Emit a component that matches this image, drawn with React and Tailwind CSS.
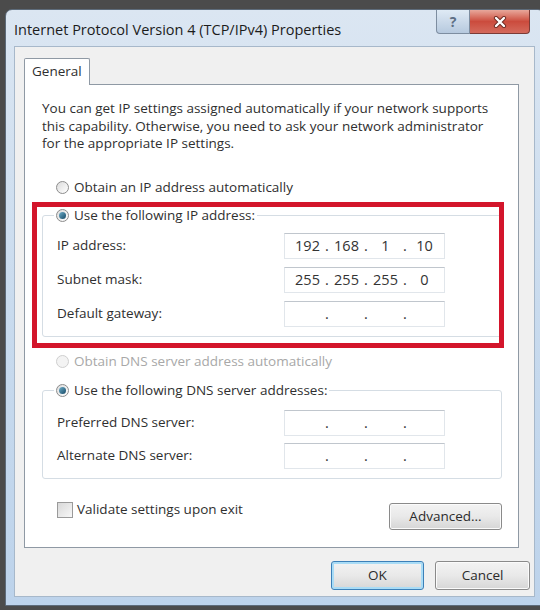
import { Fragment } from 'react';
import clsx from 'clsx';

// radio / checkbox in the Win7 look
const Radio = ({ checked, disabled }) => (
  <span
    className={clsx(
      'flex h-[13px] w-[13px] shrink-0 items-center justify-center rounded-full border',
      disabled
        ? 'border-[#cfcfcf] bg-[#f3f3f3]'
        : 'border-[#8c8c8c] bg-linear-to-br from-[#dcdcdc] to-[#ffffff]'
    )}
  >
    {checked && (
      <span className="h-[7px] w-[7px] rounded-full bg-linear-to-br from-[#6fb0cc] to-[#154a66]" />
    )}
  </span>
);

const RadioRow = ({ label, checked, disabled }) => (
  <div className="flex h-[18px] items-center gap-[5px]">
    <Radio checked={checked} disabled={disabled} />
    <span className={clsx('whitespace-nowrap', disabled && 'text-[#a8a8a8]')}>
      {label}
    </span>
  </div>
);

const IpBox = ({ parts = ['', '', '', ''] }) => (
  <div className="flex h-[26px] w-[161px] items-center border border-[#e1e6eb] border-t-[#c0c6cd] bg-white pl-[5px] text-[14.5px] text-[#333]">
    {parts.map((p, i) => (
      <Fragment key={i}>
        {i > 0 && <span className="w-[4px] text-center">.</span>}
        <span className="w-[35px] text-center">{p}</span>
      </Fragment>
    ))}
  </div>
);

const FieldRow = ({ label, parts }) => (
  <div className="flex h-[26px] items-center">
    <span className="w-[241px] pl-[14px]">{label}</span>
    <IpBox parts={parts} />
  </div>
);

const GroupBox = ({ legend, children, pt, gap }) => (
  <fieldset className="rounded-[3px] border border-[#d5dde4] pb-[9px]">
    <legend className="ml-[11px] px-[2px]">
      <RadioRow label={legend} checked />
    </legend>
    <div className={clsx('flex flex-col', pt, gap)}>{children}</div>
  </fieldset>
);

const Button = ({ children, primary, className }) => (
  <button
    className={clsx(
      'flex items-center justify-center rounded-[3px] border bg-linear-to-b from-[#f3f3f3] via-[#e9e9e9] to-[#d6d6d6] text-[#2b2b2b]',
      primary
        ? 'border-[#3c80b8] shadow-[inset_0_0_0_2px_#a9dcf6]'
        : 'border-[#8a8a8a] shadow-[inset_0_0_0_1px_#fbfbfb]',
      className
    )}
  >
    {children}
  </button>
);

export default function App() {
  return (
    <div className="h-[610px] w-[540px] overflow-hidden bg-[#4b4b4b] pl-[5px] pt-[9px] font-['Open_Sans',sans-serif] text-[13.5px] text-[#2f2f2f]">
      <div className="flex h-[597px] w-[540px] flex-col rounded-t-[7px] border border-[#5d6b7a] bg-linear-to-b from-[#dbe6f2] via-[#c9dbee] to-[#bdd3eb]">
        {/* title bar */}
        <div className="flex h-[36px] shrink-0 items-start">
          <span className="ml-[8px] mt-[9px] whitespace-nowrap text-[14.5px] text-[#1c1c1c]">
            Internet Protocol Version 4 (TCP/IPv4) Properties
          </span>
          <div className="ml-auto mr-[14px] flex">
            <div className="flex h-[24px] w-[34px] items-center justify-center rounded-bl-[4px] border border-t-0 border-[#7d8da0] bg-linear-to-b from-[#dfeaf5] to-[#b6c9de] text-[14px] font-bold text-[#5d6f84]">
              ?
            </div>
            <div className="flex h-[24px] w-[60px] items-center justify-center rounded-br-[4px] border border-l-0 border-t-0 border-[#7b3b36] bg-linear-to-b from-[#e7a79b] via-[#cb4b3d] to-[#d46a5c]">
              <svg width="14" height="12" viewBox="0 0 14 12">
                <path d="M3 2 L11 10 M11 2 L3 10" stroke="#6d2a22" strokeWidth="4.2" strokeLinecap="round" />
                <path d="M3 2 L11 10 M11 2 L3 10" stroke="#ffffff" strokeWidth="2.4" strokeLinecap="round" />
              </svg>
            </div>
          </div>
        </div>

        {/* client area */}
        <div className="ml-[8px] flex h-[551px] w-[521px] flex-col border border-[#a7b8ca] bg-[#f0f0f0] pl-[9px]">
          <div className="relative z-10 -mb-px mt-[11px] flex h-[27px] w-[66px] items-center rounded-t-[2px] border border-b-0 border-[#8f99a4] bg-white pb-[2px] pl-[7px]">
            General
          </div>

          <div className="relative h-[464px] w-[495px] border border-[#8f99a4] bg-white pl-[17px] pr-[16px] pt-[15px]">
            <p className="whitespace-nowrap leading-[17.5px]">
              You can get IP settings assigned automatically if your network supports
              <br />
              this capability. Otherwise, you need to ask your network administrator
              <br />
              for the appropriate IP settings.
            </p>

            <div className="ml-[14px] mt-[26px]">
              <RadioRow label="Obtain an IP address automatically" />
            </div>

            <div className="mt-[10px]">
              <GroupBox legend="Use the following IP address:" pt="pt-[8px]" gap="gap-[8px]">
                <FieldRow label="IP address:" parts={['192', '168', '1', '10']} />
                <FieldRow label="Subnet mask:" parts={['255', '255', '255', '0']} />
                <FieldRow label="Default gateway:" />
              </GroupBox>
            </div>

            <div className="ml-[14px] mt-[16px]">
              <RadioRow label="Obtain DNS server address automatically" disabled />
            </div>

            <div className="mt-[11px]">
              <GroupBox legend="Use the following DNS server addresses:" pt="pt-[10px]" gap="gap-[7px]">
                <FieldRow label="Preferred DNS server:" />
                <FieldRow label="Alternate DNS server:" />
              </GroupBox>
            </div>

            <div className="mt-[23px] flex items-start justify-between">
              <div className="ml-[15px] flex h-[16px] items-center gap-[4px]">
                <span className="h-[16px] w-[16px] border border-[#9a9a9a] bg-linear-to-br from-[#d9d9d9] to-[#f7f7f7]" />
                <span className="whitespace-nowrap">Validate settings upon exit</span>
              </div>
              <Button className="mt-[1px] h-[27px] w-[113px]">Advanced...</Button>
            </div>

            {/* red highlight drawn over the IP group */}
            <div className="pointer-events-none absolute left-[7px] top-[117px] h-[146px] w-[472px] border-[5px] border-[#d3152b]" />
          </div>

          <div className="mt-[13px] flex justify-end gap-[11px] pr-[4px]">
            <Button primary className="h-[29px] w-[93px]">OK</Button>
            <Button className="h-[29px] w-[95px]">Cancel</Button>
          </div>
        </div>
      </div>
    </div>
  );
}
